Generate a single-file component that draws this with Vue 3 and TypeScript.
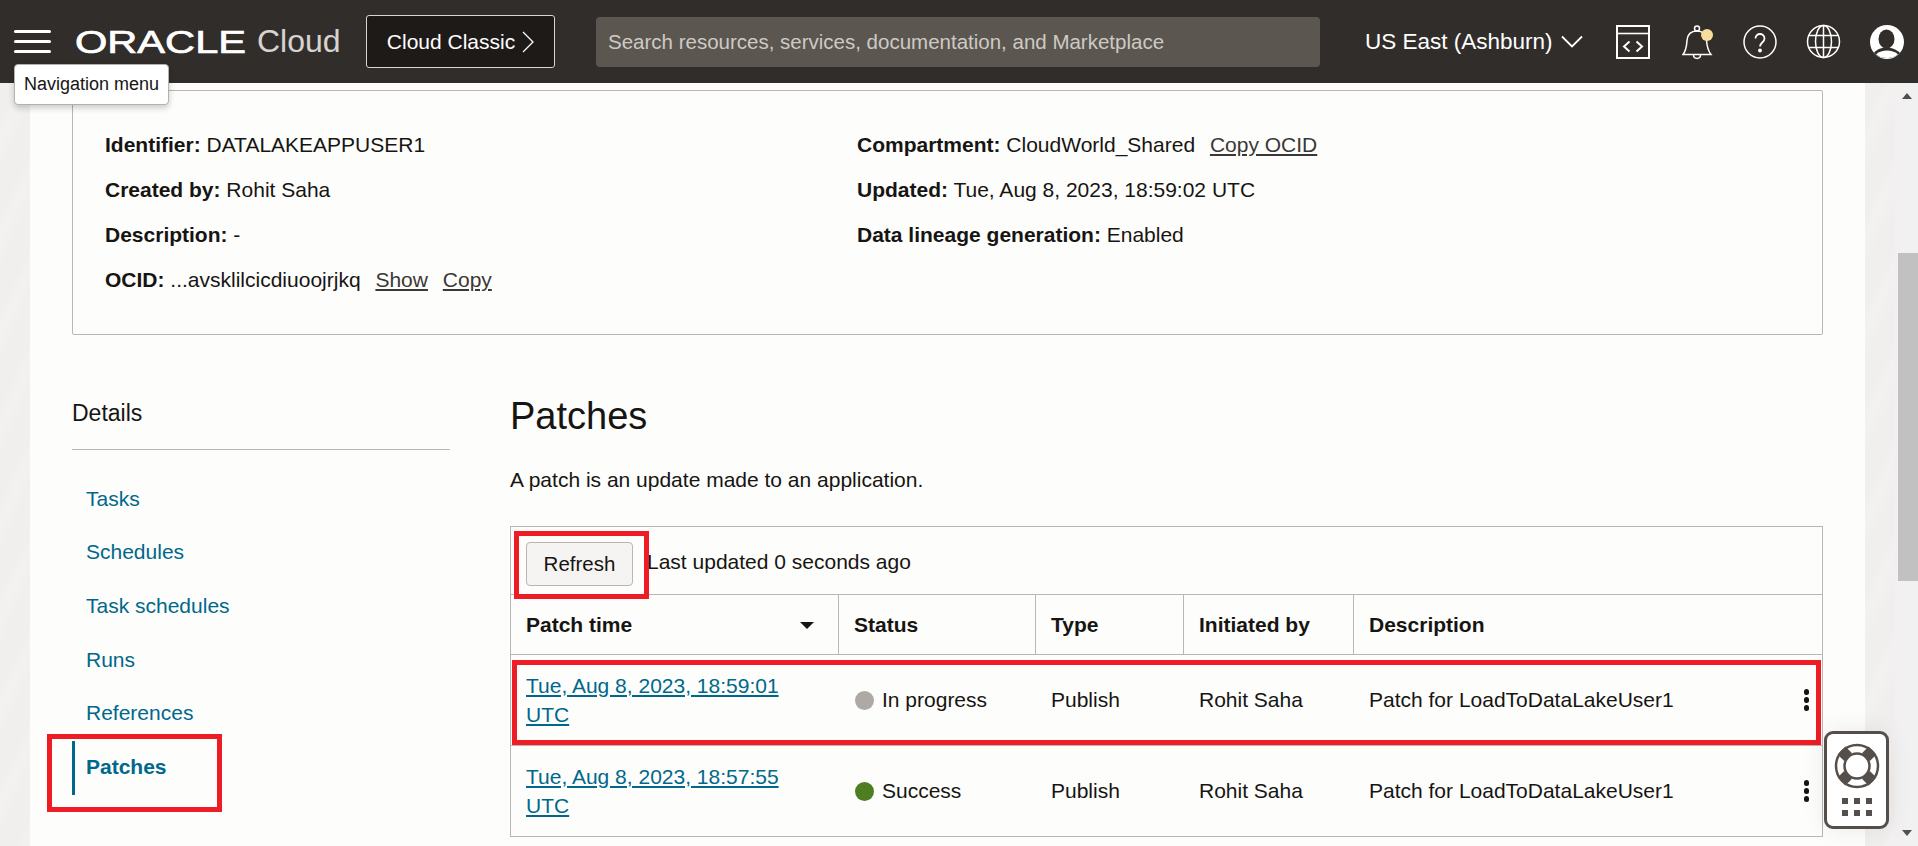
<script setup lang="ts">
interface PatchRow {
  time: string
  status: string
  tone: string
}

const navItems = ['Tasks', 'Schedules', 'Task schedules', 'Runs', 'References']

const columns = [
  { label: 'Patch time', width: 328 },
  { label: 'Status', width: 197 },
  { label: 'Type', width: 148 },
  { label: 'Initiated by', width: 170 },
  { label: 'Description', width: 469 },
]

const rows: PatchRow[] = [
  { time: 'Tue, Aug 8, 2023, 18:59:01 UTC', status: 'In progress', tone: 'grey' },
  { time: 'Tue, Aug 8, 2023, 18:57:55 UTC', status: 'Success', tone: 'green' },
]
</script>

<template>
  <div class="app-shell">
    <header class="top-bar">
      <button class="burger" aria-label="Navigation menu"><i></i><i></i><i></i></button>
      <div class="brand">
        <svg class="oracle" width="172" height="38" viewBox="0 0 172 38">
          <text x="0" y="30" textLength="171" lengthAdjust="spacingAndGlyphs">ORACLE</text>
        </svg>
        <span class="cloud">Cloud</span>
      </div>
      <button class="classic">
        Cloud Classic
        <svg width="12" height="22" viewBox="0 0 12 22"><path d="M1 1l10 10L1 21" fill="none" stroke="#fff" stroke-width="1.3" /></svg>
      </button>
      <div class="search">Search resources, services, documentation, and Marketplace</div>
      <div class="region">
        US East (Ashburn)
        <svg width="22" height="13" viewBox="0 0 22 13"><path d="M1 1.500l10 10 10-10" fill="none" stroke="#fff" stroke-width="1.8" /></svg>
      </div>
      <div class="tools">
        <svg width="34" height="34" viewBox="0 0 34 34" fill="none" stroke="#fff" stroke-width="2">
          <rect x="1" y="1" width="32" height="32" />
          <path d="M1 8.500h32" stroke-width="1.600" />
          <path d="M13.500 16.500L8 21.500l5.500 5M20.500 16.500l5.500 5-5.500 5" />
        </svg>
        <svg class="bell" width="32" height="36" viewBox="0 0 32 36" fill="none" stroke="#fff" stroke-width="1.500">
          <path d="M1 30.500h28c-3.500-4.500-4-8-4.500-14C24 10.500 21 7 15 7S5.500 10.500 5 16.500c-.5 6-.5 9.500-4 14z" />
          <circle cx="15" cy="4.500" r="2.500" />
          <path d="M11.500 31c0 4.500 7 4.500 7 0" />
          <circle cx="25" cy="11" r="6" fill="#f7dc9a" stroke="none" />
        </svg>
        <svg width="34" height="34" viewBox="0 0 34 34" fill="none" stroke="#fff" stroke-width="1.500">
          <circle cx="17" cy="17" r="16" />
          <path d="M12.500 13.500c0-6 9-6 9 0 0 4-4.500 4-4.500 8" stroke-width="1.800" />
          <circle cx="17" cy="25.500" r="1.200" fill="#fff" />
        </svg>
        <svg width="35" height="35" viewBox="0 0 35 35" fill="none" stroke="#fff" stroke-width="1.500">
          <circle cx="17.500" cy="17.500" r="16" />
          <ellipse cx="17.500" cy="17.500" rx="8" ry="16" />
          <path d="M17.500 1.500v32M3 11.500h29M3 23.500h29" />
        </svg>
        <svg width="34" height="34" viewBox="0 0 34 34">
          <circle cx="17" cy="17" r="17" fill="#fff" />
          <ellipse cx="16.500" cy="14" rx="8" ry="9.500" fill="#312d2a" />
          <path d="M4 28c3-4 8-5.500 12.500-5.500S26 24 30 28c-3 3.500-8 5-13 5S7 31.500 4 28z" fill="#312d2a" />
          <path d="M6 29.500c3-3 7-4 11-4s8 1 11 4c-3 2.500-7 3.500-11 3.500s-8-1-11-3.500z" fill="#fff" />
        </svg>
      </div>
    </header>

    <div class="tip">Navigation menu</div>

    <div class="page">
      <div class="gutter"></div>
      <main class="panel">
        <section class="summary">
          <div class="summary-col">
            <p><b>Identifier:</b> DATALAKEAPPUSER1</p>
            <p><b>Created by:</b> Rohit Saha</p>
            <p><b>Description:</b> -</p>
            <p><b>OCID:</b> ...avsklilcicdiuoojrjkq <a class="plain">Show</a> <a class="plain">Copy</a></p>
          </div>
          <div class="summary-col">
            <p><b>Compartment:</b> CloudWorld_Shared <a class="plain">Copy OCID</a></p>
            <p><b>Updated:</b> Tue, Aug 8, 2023, 18:59:02 UTC</p>
            <p><b>Data lineage generation:</b> Enabled</p>
          </div>
        </section>

        <div class="body">
          <aside class="side">
            <h3>Details</h3>
            <ul>
              <li v-for="item in navItems" :key="item">{{ item }}</li>
              <li class="active">Patches<span class="mark side-mark"></span></li>
            </ul>
          </aside>

          <section class="content">
            <h1>Patches</h1>
            <p class="lead">A patch is an update made to an application.</p>

            <div class="table-box">
              <div class="toolbar">
                <button class="refresh">Refresh<span class="mark refresh-mark"></span></button>
                <span class="updated">Last updated 0 seconds ago</span>
              </div>
              <div class="head-row">
                <div v-for="col in columns" :key="col.label" class="th" :style="{ width: col.width + 'px' }">
                  {{ col.label }}
                  <i v-if="col.label === 'Patch time'" class="sort"></i>
                </div>
              </div>
              <div v-for="(row, index) in rows" :key="row.time" class="row">
                <span v-if="index === 0" class="mark row-mark"></span>
                <div class="td" :style="{ width: columns[0].width + 'px' }"><a class="time">{{ row.time }}</a></div>
                <div class="td" :style="{ width: columns[1].width + 'px' }"><i class="dot" :class="row.tone"></i>{{ row.status }}</div>
                <div class="td" :style="{ width: columns[2].width + 'px' }">Publish</div>
                <div class="td" :style="{ width: columns[3].width + 'px' }">Rohit Saha</div>
                <div class="td grow">
                  Patch for LoadToDataLakeUser1
                  <span class="kebab"><i></i><i></i><i></i></span>
                </div>
              </div>
            </div>
          </section>
        </div>
      </main>
      <div class="gutter"></div>
      <div class="scroll">
        <i class="arrow up"></i>
        <div class="thumb"></div>
        <i class="arrow down"></i>
      </div>
    </div>

    <div class="support">
      <svg width="46" height="46" viewBox="0 0 46 46" fill="none" stroke="#544f4b">
        <circle cx="23" cy="23" r="21" stroke-width="2.500" />
        <circle cx="23" cy="23" r="12.500" stroke-width="2.500" />
        <path d="M14 14L7.500 7.500M32 14l6.500-6.500M14 32l-6.500 6.500M32 32l6.500 6.500" stroke-width="11" />
        <circle cx="23" cy="23" r="16.500" stroke="#fff" stroke-width="1.500" stroke-dasharray="13 12.920" stroke-dashoffset="6.500" transform="rotate(-90 23 23)" />
      </svg>
      <div class="dots"><i v-for="n in 6" :key="n"></i></div>
    </div>
  </div>
</template>

<style scoped>
.app-shell {
  position: relative;
  height: 846px;
  overflow: hidden;
  display: flex;
  flex-direction: column;
  font-family: "Liberation Sans", Arial, sans-serif;
  font-size: 21px;
  color: #161513;
  background: #fcfbfa;
}

.top-bar {
  height: 83px;
  flex: none;
  display: flex;
  align-items: center;
  background: #312d2a;
  color: #fff;
}

.burger {
  width: 37px;
  margin-left: 14px;
  padding: 0;
  background: none;
  border: 0;
  display: flex;
  flex-direction: column;
  gap: 7px;
}

.burger i {
  height: 3px;
  background: #fff;
  border-radius: 2px;
}

.brand {
  margin-left: 24px;
  width: 291px;
  display: flex;
  align-items: center;
}

.oracle text {
  font-size: 31px;
  font-weight: 400;
  fill: #fff;
  stroke: #fff;
  stroke-width: 0.7px;
}

.cloud {
  margin-left: 10px;
  font-size: 32px;
  color: #e8e6e2;
  font-weight: 400;
  opacity: 0.9;
}

.classic {
  width: 189px;
  height: 53px;
  padding: 0;
  display: flex;
  align-items: center;
  justify-content: center;
  gap: 7px;
  background: #1e1a18;
  color: #fff;
  border: 1px solid #d8d5d0;
  border-radius: 3px;
  font: 21px "Liberation Sans", Arial, sans-serif;
}

.search {
  margin-left: 41px;
  width: 712px;
  height: 50px;
  padding-left: 12px;
  display: flex;
  align-items: center;
  background: #5b5650;
  border-radius: 4px;
  color: #cdcac4;
  font-size: 20.500px;
}

.region {
  margin-left: 45px;
  width: 251px;
  display: flex;
  align-items: center;
  gap: 8px;
  font-size: 22.500px;
}

.tools {
  display: flex;
  align-items: center;
  gap: 29px;
}

.bell {
  margin-left: 3px;
}

.tip {
  position: absolute;
  left: 14px;
  top: 64px;
  width: 155px;
  height: 41px;
  box-sizing: border-box;
  display: flex;
  align-items: center;
  justify-content: center;
  background: #fff;
  border: 1px solid #b5b1ac;
  border-radius: 4px;
  box-shadow: 0 3px 6px rgba(0, 0, 0, 0.2);
  font-size: 18px;
  z-index: 5;
}

.page {
  flex: 1;
  min-height: 0;
  display: flex;
}

.gutter {
  width: 30px;
  flex: none;
  background: repeating-linear-gradient(115deg, #f0efed 0 16px, #f3f2f0 24px, #f0efed 40px);
}

.panel {
  flex: 1;
  min-width: 0;
  padding: 7px 42px 0 42px;
  background: #fdfdfb;
}

.scroll {
  width: 23px;
  flex: none;
  position: relative;
  background: #f1f1f1;
}

.thumb {
  position: absolute;
  left: 3px;
  right: 0;
  top: 170px;
  height: 328px;
  background: #c1c1c1;
}

.arrow {
  position: absolute;
  left: 7px;
  width: 0;
  height: 0;
  border-left: 5px solid transparent;
  border-right: 5px solid transparent;
}

.arrow.up {
  top: 10px;
  border-bottom: 6px solid #505050;
}

.arrow.down {
  bottom: 10px;
  border-top: 6px solid #505050;
}

.summary {
  height: 245px;
  box-sizing: border-box;
  padding: 30.500px 32px 0;
  display: grid;
  grid-template-columns: 752px 1fr;
  border: 1px solid #bcb6b1;
  border-radius: 2px;
}

.summary p {
  margin: 0;
  height: 45.300px;
  line-height: 45.300px;
}

.plain {
  margin-left: 9px;
  color: #3b3835;
  text-decoration: underline;
}

.body {
  display: flex;
  gap: 60px;
}

.side {
  width: 378px;
  flex: none;
}

.side h3 {
  margin: 63px 0 0;
  padding-bottom: 21px;
  font-size: 23px;
  font-weight: 400;
  line-height: 30px;
  border-bottom: 1px solid #bcb6b1;
}

.side ul {
  list-style: none;
  margin: 21.700px 0 0;
  padding: 0 0 0 14px;
}

.side li {
  position: relative;
  height: 53.700px;
  line-height: 53.700px;
  color: #00688c;
}

.side li.active {
  font-weight: 700;
}

.content {
  flex: 1;
  min-width: 0;
}

h1 {
  margin: 58px 0 0;
  font-size: 38px;
  font-weight: 400;
  line-height: 46px;
}

.lead {
  margin: 28px 0 0;
  line-height: 26px;
}

.table-box {
  margin-top: 33px;
  border-left: 1px solid #bcb6b1;
  border-right: 1px solid #bcb6b1;
  border-top: 1px solid #bcb6b1;
}

.toolbar {
  height: 67px;
  display: flex;
  align-items: center;
  padding-left: 15px;
  gap: 14px;
  border-bottom: 1px solid #bcb6b1;
}

.refresh {
  position: relative;
  width: 107px;
  height: 44px;
  margin-top: 7px;
  padding: 0;
  background: #f5f4f2;
  border: 1px solid #bcb6b1;
  border-radius: 4px;
  color: #161513;
  font: 20.500px "Liberation Sans", Arial, sans-serif;
}

.updated {
  margin-top: 3px;
}

.head-row {
  height: 59px;
  display: flex;
  border-bottom: 1px solid #bcb6b1;
}

.th {
  position: relative;
  box-sizing: border-box;
  padding-left: 15px;
  display: flex;
  align-items: center;
  font-weight: 700;
  border-right: 1px solid #bcb6b1;
}

.th:last-child {
  flex: 1;
  border-right: 0;
}

.sort {
  position: absolute;
  right: 24px;
  top: 27px;
  border-left: 7.500px solid transparent;
  border-right: 7.500px solid transparent;
  border-top: 7px solid #161513;
}

.row {
  position: relative;
  height: 90px;
  display: flex;
  border-bottom: 1px solid #bcb6b1;
}

.td {
  box-sizing: border-box;
  padding-left: 15px;
  padding-right: 24px;
  display: flex;
  align-items: center;
  line-height: 29.500px;
}

.td.grow {
  position: relative;
  flex: 1;
}

.time {
  color: #00688c;
  text-decoration: underline;
}

.dot {
  width: 19px;
  height: 19px;
  flex: none;
  margin: 0 8px 0 1px;
  border-radius: 50%;
}

.dot.grey {
  background: #aea9a4;
}

.dot.green {
  background: #4f7d21;
}

.kebab {
  position: absolute;
  right: 13px;
  top: 50%;
  margin-top: -11px;
  display: flex;
  flex-direction: column;
  gap: 2.500px;
}

.kebab i {
  width: 5.500px;
  height: 5.500px;
  border-radius: 50%;
  background: #161513;
}

.mark {
  position: absolute;
  box-sizing: border-box;
  border: 5px solid #ee1c25;
  z-index: 2;
  pointer-events: none;
}

.side-mark {
  left: -39px;
  top: -6px;
  width: 175px;
  height: 78px;
}

.refresh-mark {
  left: -13px;
  top: -12px;
  width: 135px;
  height: 68px;
}

.row-mark {
  left: 1px;
  top: 5px;
  width: 1309px;
  height: 85px;
}

.side li.active::before {
  content: "";
  position: absolute;
  left: -14px;
  top: 1px;
  width: 3px;
  height: 54px;
  background: #00688c;
}

.support {
  position: absolute;
  left: 1824px;
  top: 731px;
  width: 65px;
  height: 98px;
  box-sizing: border-box;
  padding-top: 9px;
  display: flex;
  flex-direction: column;
  align-items: center;
  gap: 9px;
  background: #fff;
  border: 3px solid #544f4b;
  border-radius: 9px;
  box-shadow: 0 0 24px rgba(0, 0, 0, 0.08);
  z-index: 4;
}

.dots {
  display: grid;
  grid-template-columns: repeat(3, 6px);
  gap: 6px;
}

.dots i {
  height: 6px;
  background: #544f4b;
}
</style>
